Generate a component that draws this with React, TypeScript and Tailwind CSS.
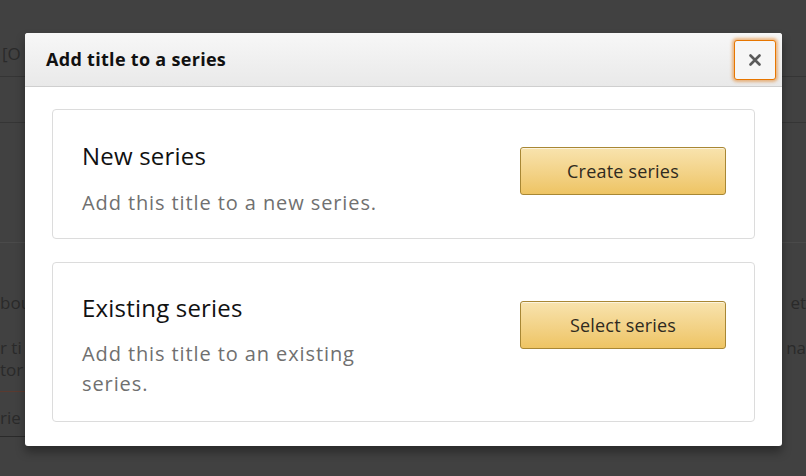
import React from "react"

const font = { fontFamily: '"Open Sans", "Noto Sans", Arial, sans-serif' }

function SeriesCard({
  title,
  description,
  action,
  tall,
}: {
  title: string
  description: string
  action: string
  tall?: boolean
}) {
  return (
    <div
      className={`flex items-start justify-between rounded-[4px] border border-[#dcdcdc] pl-[29px] pr-[28px] ${
        tall ? "h-[160px] pt-[30px]" : "h-[130px] pt-[31px]"
      }`}
    >
      <div className="w-[312px]">
        <h3 className="text-[24px] leading-[30px] tracking-[0.2px] text-[#111]">{title}</h3>
        <p
          className={`text-[20px] leading-[30px] tracking-[0.9px] text-[#707070] ${
            tall ? "mt-[16px]" : "mt-[17px]"
          }`}
        >
          {description}
        </p>
      </div>
      <button
        className={`h-[48px] w-[206px] rounded-[3px] border border-[#a88734] bg-gradient-to-b from-[#f8e3ad] to-[#eec463] text-[18px] font-medium tracking-[0.2px] text-[#2f2a20] shadow-[inset_0_1px_0_rgba(255,255,255,0.6)] ${
          tall ? "mt-[8px]" : "mt-[6px]"
        }`}
      >
        {action}
      </button>
    </div>
  )
}

export default function App() {
  return (
    <div className="relative h-[476px] w-[806px] overflow-hidden bg-[#414141]" style={font}>
      {/* page behind the overlay */}
      <div className="flex h-full flex-col text-[17px] text-[#2a2a2a]">
        <div className="h-[77px] border-b border-[#353535] pl-[2px] pt-[42px] leading-[24px]">[O</div>
        <div className="h-[46px] border-b border-[#353535]" />
        <div className="h-[120px] border-b border-[#4a4a4a]" />
        <div className="flex justify-between pt-[48px] leading-[24px]">
          <span>bou</span>
          <span>et</span>
        </div>
        <div className="flex justify-between pt-[22px] leading-[22px]">
          <span>r ti</span>
          <span>na</span>
        </div>
        <div className="leading-[22px]">tor</div>
        <div className="mt-[10px] w-[40px] border-b border-[#5a3a30]" />
        <div className="pt-[14px] leading-[24px]">rie</div>
        <div className="mt-[6px] w-[112px] border-b border-[#2a2a2a]" />
      </div>

      {/* modal */}
      <div className="absolute left-[25px] top-[33px] flex h-[413px] w-[757px] flex-col rounded-[3px] bg-white shadow-[0_6px_10px_rgba(0,0,0,0.35)]">
        <div className="flex h-[54px] items-center justify-between rounded-t-[3px] border-b border-[#cfcfcf] bg-gradient-to-b from-[#f7f7f7] to-[#e9e9e9] pl-[21px] pr-[6px]">
          <h2 className="text-[18px] font-bold tracking-[0.3px] text-[#111]">Add title to a series</h2>
          <button className="flex h-[40px] w-[42px] items-center justify-center rounded-[3px] border border-[#e77600] bg-[#f6f6f6] shadow-[0_0_3px_2px_rgba(228,121,17,0.5)]">
            <svg width="12" height="12" viewBox="0 0 12 12">
              <path d="M1.5 1.5L10.5 10.5M10.5 1.5L1.5 10.5" stroke="#5a5a5a" strokeWidth="2.6" strokeLinecap="round" />
            </svg>
          </button>
        </div>
        <div className="flex flex-col gap-[23px] px-[27px] pt-[22px]">
          <SeriesCard title="New series" description="Add this title to a new series." action="Create series" />
          <SeriesCard
            title="Existing series"
            description="Add this title to an existing series."
            action="Select series"
            tall
          />
        </div>
      </div>
    </div>
  )
}
